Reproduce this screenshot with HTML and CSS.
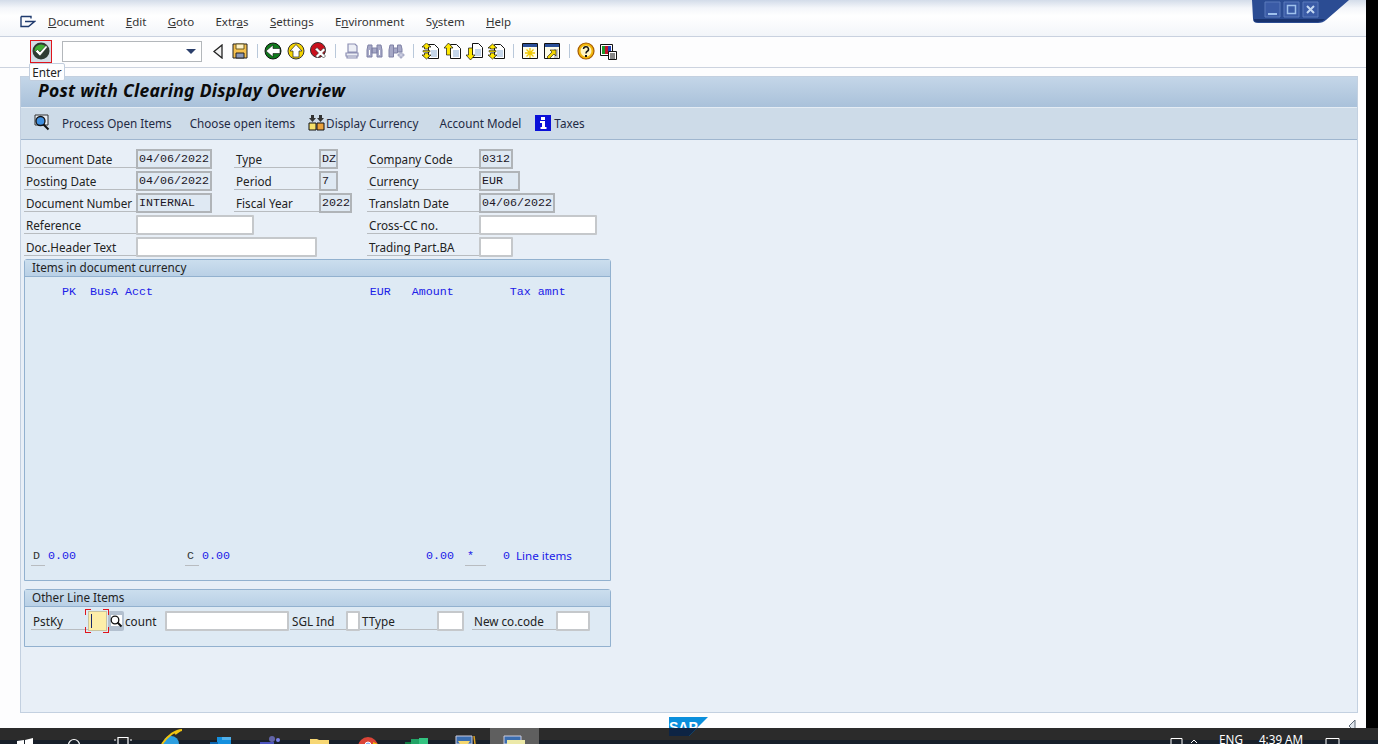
FILE: index.html
```html
<!DOCTYPE html>
<html lang="en">
<head>
    <meta charset="UTF-8">
    <meta name="viewport" content="width=device-width, initial-scale=1.0">
    <title>Post with Clearing Display Overview</title>
    <link rel="stylesheet" href="styles.css">
</head>
<body>
    <div class="screen">
        <div class="window-row">
            <div class="sap">
                <div class="menubar">
                    <svg class="menu-icon" width="16" height="14" viewBox="0 0 16 14"><path d="M1 1.500h10v2M1 1.500v10h7.500l6-5H5" fill="none" stroke="#1f3a6e" stroke-width="1.400"/></svg>
                    <a class="menu-item"><u>D</u>ocument</a>
                    <a class="menu-item"><u>E</u>dit</a>
                    <a class="menu-item"><u>G</u>oto</a>
                    <a class="menu-item">Extr<u>a</u>s</a>
                    <a class="menu-item"><u>S</u>ettings</a>
                    <a class="menu-item">E<u>n</u>vironment</a>
                    <a class="menu-item">S<u>y</u>stem</a>
                    <a class="menu-item"><u>H</u>elp</a>
                </div>

                <div class="toolbar">
                    <button class="enter-btn" type="button">
                        <svg width="18" height="18" viewBox="0 0 18 18"><circle cx="9" cy="9" r="8.500" fill="#2f3a33"/><path d="M2.500 9a6.500 6.500 0 0 1 12-3.500L8 9z" fill="#3fae35"/><path d="M3.500 9.500l2-2 2.500 2.500 6-6.500 1.500 1.500-7.500 9z" fill="#fff" stroke="#1d2a20" stroke-width=".5"/></svg>
                    </button>
                    <div class="command-field"><span class="dropdown-arrow"></span></div>
                    <div class="tool-group">
                        <span class="tool"><svg width="12" height="15" viewBox="0 0 12 15"><path d="M10 1v13L2 7.500z" fill="#f2f2f2" stroke="#222" stroke-width="1.300"/></svg></span>
                        <span class="tool"><svg width="16" height="16" viewBox="0 0 16 16"><path d="M1 1h14v14H1z" fill="#f5c04e" stroke="#222"/><path d="M4 1h8v5H4z" fill="#fff3c8" stroke="#6d5a20"/><path d="M4 10h8v5H4z" fill="#8a97b8" stroke="#222"/></svg></span>
                    </div>
                    <span class="sep"></span>
                    <div class="tool-group nav-group">
                        <span class="tool"><svg width="18" height="18" viewBox="0 0 18 18"><circle cx="9" cy="9" r="8" fill="#0f7a1c" stroke="#111"/><path d="M2 9l7-6v3.500h7v5H9V15z" fill="#fff" stroke="#111" stroke-width=".6"/></svg></span>
                        <span class="tool"><svg width="18" height="18" viewBox="0 0 18 18"><circle cx="9" cy="9" r="8" fill="#f5d400" stroke="#333"/><path d="M9 2.500l6 6.500h-3v6H6V9H3z" fill="#fff" stroke="#222" stroke-width=".7"/></svg></span>
                        <span class="tool"><svg width="18" height="18" viewBox="0 0 18 18"><circle cx="8" cy="8" r="7.500" fill="#c9101c" stroke="#333"/><path d="M5 7.500l2-2 3.500 3.500 3-3 2 2-3 3 3 3-2 2-3-3-3 3-2-2 3-3z" fill="#fff" stroke="#222" stroke-width=".6"/></svg></span>
                    </div>
                    <span class="sep"></span>
                    <div class="tool-group">
                        <span class="tool"><svg width="16" height="16" viewBox="0 0 16 16"><path d="M4 1h7l2 2v6H4zM2 10h12v3H2zM3 13h10v2H3z" fill="#eceef5" stroke="#8e90b4" stroke-width="1.200"/></svg></span>
                        <span class="tool"><svg width="17" height="16" viewBox="0 0 17 16"><path d="M2 2h4v12H1V7zM11 2h4l1 5v7h-5zM6 5h5v5H6z" fill="#a6a8c6" stroke="#7f81a6"/><path d="M3 7h1v5H3zM13 7h1v5h-1z" fill="#fff"/></svg></span>
                        <span class="tool"><svg width="17" height="16" viewBox="0 0 17 16"><path d="M2 2h3.500v12H1V7zM9.500 2H13l1 4v3H9.500zM5.500 5h4v5h-4z" fill="#a6a8c6" stroke="#7f81a6"/><path d="M12 9h2v2h2v2h-2v2h-2v-2h-2v-2h2z" fill="#c8cadf" stroke="#8c8eae" stroke-width=".6"/></svg></span>
                    </div>
                    <span class="sep"></span>
                    <div class="tool-group">
                        <span class="tool"><svg width="17" height="17" viewBox="0 0 17 17"><path d="M6.500 1.500h6l4 4v10h-10z" fill="#fff" stroke="#111"/><path d="M9 7h6v7H9z" fill="#c5d6ea"/><path d="M4.500 0L9 4H6.500v2h-4V4H0zM4.500 16L9 12H6.500v-2h-4v2H0z" fill="#ffe800" stroke="#111" stroke-width=".7"/><path d="M1 7.500h7v1.500H1z" fill="#ffe800" stroke="#111" stroke-width=".5"/></svg></span>
                        <span class="tool"><svg width="17" height="17" viewBox="0 0 17 17"><path d="M6.500 1.500h6l4 4v10h-10z" fill="#fff" stroke="#111"/><path d="M9 7h6v7H9z" fill="#c5d6ea"/><path d="M4.500 0L9 5H6.500v7h-4V5H0z" fill="#ffe800" stroke="#111" stroke-width=".7"/></svg></span>
                        <span class="tool"><svg width="17" height="17" viewBox="0 0 17 17"><path d="M6.500 .5h6l4 4v10h-10z" fill="#fff" stroke="#111"/><path d="M9 6h6v7H9z" fill="#c5d6ea"/><path d="M4.500 17L9 12H6.500V5h-4v7H0z" fill="#ffe800" stroke="#111" stroke-width=".7"/></svg></span>
                        <span class="tool"><svg width="17" height="17" viewBox="0 0 17 17"><path d="M6.500 1.500h6l4 4v10h-10z" fill="#fff" stroke="#111"/><path d="M9 7h6v7H9z" fill="#c5d6ea"/><path d="M4.500 1L9 5H6.500v1h-4V5H0zM4.500 16L9 12H6.500v-2h-4v2H0z" fill="#ffe800" stroke="#111" stroke-width=".7"/><path d="M1 7.500h7v1.500H1z" fill="#ffe800" stroke="#111" stroke-width=".5"/></svg></span>
                    </div>
                    <span class="sep"></span>
                    <div class="tool-group">
                        <span class="tool"><svg width="16" height="16" viewBox="0 0 16 16"><path d="M.5.500h15v15H.5z" fill="#fffde8" stroke="#111"/><path d="M1 1h14v3H1z" fill="#2a4f9a"/><path d="M8 5v10M3 10h10M4.500 6.500l7 7M11.500 6.500l-7 7" stroke="#f0c800" stroke-width="1.300"/></svg></span>
                        <span class="tool"><svg width="16" height="16" viewBox="0 0 16 16"><path d="M.5.500h15v15H.5z" fill="#fffde8" stroke="#111"/><path d="M1 1h14v3H1z" fill="#2a4f9a"/><path d="M10 6h4v9h-4z" fill="#c8c8c8"/><path d="M3 14l5-5-2-2h6v6l-2-2-5 5z" fill="#f3d400" stroke="#111" stroke-width=".6"/></svg></span>
                    </div>
                    <span class="sep"></span>
                    <div class="tool-group">
                        <span class="tool"><svg width="18" height="18" viewBox="0 0 18 18"><circle cx="9" cy="9" r="8" fill="#f2b90c" stroke="#a85b00" stroke-width="1.200"/><circle cx="9" cy="9" r="5.500" fill="#fff6c4"/><path d="M6.500 7a2.500 2.500 0 1 1 3.500 2.500c-1 .5-1 1-1 2" fill="none" stroke="#111" stroke-width="1.500"/><path d="M8 13h2v2H8z" fill="#111"/></svg></span>
                        <span class="tool"><svg width="17" height="17" viewBox="0 0 17 17"><path d="M.5 1.500h12v11H.5z" fill="#fff" stroke="#111"/><path d="M2 3h3v8H2z" fill="#1c9a2c"/><path d="M5 3h3v8H5z" fill="#c4122a"/><path d="M8 3h3v8H8z" fill="#2244b8"/><path d="M8.500 8.500h8v8h-8z" fill="#fff" stroke="#111"/><path d="M10 11h5M10 13h5M10 15h5" stroke="#111"/></svg></span>
                    </div>
                </div>

                <div class="tooltip">Enter</div>

                <main class="panel">
                    <h1 class="title">Post with Clearing Display Overview</h1>
                    <div class="appbar">
                        <svg class="app-search" width="17" height="17" viewBox="0 0 17 17"><path d="M2 1h13v10H2z" fill="#e8eef5" stroke="#333"/><circle cx="7.500" cy="7" r="4.500" fill="#3f8fdf" stroke="#111" stroke-width="1.300"/><path d="M10.500 10.500l5 5" stroke="#111" stroke-width="2"/></svg>
                        <span class="app-item app-process">Process Open Items</span>
                        <span class="app-item app-choose">Choose open items</span>
                        <svg class="app-currency" width="17" height="17" viewBox="0 0 17 17"><path d="M1 9h7v7H1z" fill="#f6e26a" stroke="#111"/><path d="M9 9h7v7H9z" fill="#eaa23c" stroke="#111"/><path d="M3 1h3v3h2L4.500 8 1 4h2zM11 1h3v3h2l-3.500 4L9 4h2z" fill="#333"/></svg>
                        <span class="app-item">Display Currency</span>
                        <span class="app-item app-account">Account Model</span>
                        <svg class="app-info" width="16" height="16" viewBox="0 0 16 16"><path d="M0 0h16v16H0z" fill="#0a10d8"/><path d="M6 2h4v3H6zM5 6h5v6h1.500v2h-6v-2H7V8H5z" fill="#fff"/></svg>
                        <span class="app-item">Taxes</span>
                    </div>

                    <div class="panel-body">
                        <form class="head-form">
                            <label class="lbl">Document Date</label>
                            <div class="field w-date">04/06/2022</div>
                            <label class="lbl lbl-mid">Type</label>
                            <div class="field w-short">DZ</div>
                            <label class="lbl lbl-right">Company Code</label>
                            <div class="field w-code">0312</div>

                            <label class="lbl">Posting Date</label>
                            <div class="field w-date">04/06/2022</div>
                            <label class="lbl lbl-mid">Period</label>
                            <div class="field w-short">7</div>
                            <label class="lbl lbl-right">Currency</label>
                            <div class="field w-curr">EUR</div>

                            <label class="lbl">Document Number</label>
                            <div class="field w-date">INTERNAL</div>
                            <label class="lbl lbl-mid">Fiscal Year</label>
                            <div class="field w-year">2022</div>
                            <label class="lbl lbl-right">Translatn Date</label>
                            <div class="field w-date">04/06/2022</div>

                            <label class="lbl">Reference</label>
                            <input class="entry w-ref span-ref" type="text">
                            <label class="lbl lbl-right">Cross-CC no.</label>
                            <input class="entry w-ref" type="text">

                            <label class="lbl">Doc.Header Text</label>
                            <input class="entry w-text span-ref" type="text">
                            <label class="lbl lbl-right">Trading Part.BA</label>
                            <input class="entry w-code" type="text">
                        </form>

                        <section class="group group-items">
                            <h2 class="group-head">Items in document currency</h2>
                            <div class="item-cols">PK  BusA Acct                               EUR   Amount        Tax amnt</div>
                            <div class="totals">
                                <span class="tot-key">D</span>
                                <span class="tot-val">0.00</span>
                                <span class="tot-key">C</span>
                                <span class="tot-val">0.00</span>
                                <span class="tot-sum">0.00</span>
                                <span class="tot-key tot-star">*</span>
                                <span class="tot-count">0</span>
                                <span class="tot-text">Line items</span>
                            </div>
                        </section>

                        <section class="group group-other">
                            <h2 class="group-head">Other Line Items</h2>
                            <div class="other-row">
                                <label class="lbl">PstKy</label>
                                <div class="focus-field"><span class="caret"></span></div>
                                <span class="search-help"><svg width="14" height="14" viewBox="0 0 14 14"><path d="M2 1h11v11H2z" fill="#fff"/><circle cx="6" cy="6" r="3.800" fill="#fff" stroke="#111" stroke-width="1.300"/><path d="M8.500 8.500l4 4" stroke="#111" stroke-width="2"/></svg></span>
                                <label class="lbl-plain">count</label>
                                <input class="entry w-count" type="text">
                                <label class="lbl">SGL Ind</label>
                                <input class="entry w-fill" type="text">
                                <label class="lbl">TType</label>
                                <input class="entry w-fill" type="text">
                                <span></span>
                                <label class="lbl">New co.code</label>
                                <input class="entry w-fill" type="text">
                            </div>
                        </section>
                    </div>
                </main>

                <div class="statusbar">
                    <svg class="resize-mark" width="8" height="14" viewBox="0 0 8 14"><path d="M7 1v12L1 7z" fill="#dfe5ec" stroke="#5f6a78"/></svg>
                </div>
            </div>
            <div class="edge"></div>
        </div>

        <div class="taskbar">
            <span class="task"><svg width="16" height="16" viewBox="0 0 16 16"><path d="M0 13l7-1v4H0zM8 12l8-2v6H8z" fill="#fff"/></svg></span>
            <span class="task"><svg width="16" height="16" viewBox="0 0 16 16"><circle cx="8" cy="17" r="5.500" fill="none" stroke="#fff" stroke-width="1.200"/></svg></span>
            <span class="task"><svg width="24" height="16" viewBox="0 0 24 16"><path d="M7 9.500h10v7H7z" fill="none" stroke="#fff" stroke-width="1.200"/><path d="M3 12h2M19 12h2" stroke="#fff" stroke-width="1.200"/></svg></span>
            <span class="task"><svg width="24" height="16" viewBox="0 0 24 16"><circle cx="11" cy="16" r="8" fill="#2d9fe0"/><path d="M2 16c6-9 14-14 20-14-2 0-4 2-7 4" fill="none" stroke="#f1c40f" stroke-width="2"/></svg></span>
            <span class="task"><svg width="24" height="16" viewBox="0 0 24 16"><path d="M8 9h14v7H8z" fill="#1490df"/><path d="M1 14h8v2H1z" fill="#0a64ad"/><path d="M13 9h9v3h-9z" fill="#50b0ec"/></svg></span>
            <span class="task"><svg width="24" height="16" viewBox="0 0 24 16"><circle cx="14" cy="11" r="3" fill="#6264a7"/><circle cx="20" cy="12" r="2" fill="#7b83eb"/><path d="M2 14h14v2H2z" fill="#4b53bc"/></svg></span>
            <span class="task"><svg width="24" height="16" viewBox="0 0 24 16"><path d="M3 11h7l2 1h10v4H3z" fill="#f7d774"/></svg></span>
            <span class="task"><svg width="24" height="16" viewBox="0 0 24 16"><circle cx="12" cy="19" r="10" fill="#db4437"/><path d="M17 14l5 2h-5z" fill="#f4c20d"/><circle cx="12" cy="17" r="3" fill="#8ab4f8" stroke="#fff"/></svg></span>
            <span class="task"><svg width="26" height="16" viewBox="0 0 26 16"><path d="M1 14h10v2H1z" fill="#107c41"/><path d="M7 11h8v5H7z" fill="#21a366"/><path d="M15 10h9v6h-9z" fill="#33c481"/></svg></span>
            <span class="task"><svg width="24" height="16" viewBox="0 0 24 16"><path d="M2 8h16v8H2z" fill="#3a6db0" stroke="#ccd"/><path d="M4 13h12l-2 3H6z" fill="#f5d76e"/><path d="M20 8l1 8" stroke="#d9a021" stroke-width="1.500"/></svg></span>
            <span class="task task-active"><svg width="24" height="16" viewBox="0 0 24 16"><path d="M1 8h17v8H1z" fill="#3a6db0" stroke="#ccd"/><path d="M4 12h18v4H4z" fill="#ece9a8"/></svg></span>
            <div class="tray">
                <svg width="14" height="16" viewBox="0 0 14 16"><path d="M1 10.500h11v6H1z" fill="none" stroke="#fff"/></svg>
                <svg class="tray-up" width="8" height="16" viewBox="0 0 8 16"><path d="M1 15l3-3 3 3" fill="none" stroke="#fff"/></svg>
                <span class="tray-lang">ENG</span>
                <span class="tray-time">4:39 AM</span>
                <svg class="tray-note" width="16" height="16" viewBox="0 0 16 16"><path d="M1 10.500h13v6H1z" fill="none" stroke="#fff"/></svg>
            </div>
        </div>

        <svg class="winctl" width="98" height="24" viewBox="0 0 98 24">
            <path d="M0 0h97L74 20q-3 3-8 3H6q-5 0-5-4z" fill="#2b4c93"/>
            <path d="M2 20q0 2 4 2h60q4 0 7-3H2z" fill="#18326e"/>
            <path d="M13 2h15v15H13zM32 2h15v15H32zM51 2h15v15H51z" fill="#3a5ba6" stroke="#5a7abb"/>
            <path d="M16 13h9v2h-9z" fill="#9fc1ec"/>
            <path d="M35.500 5.500h8v8h-8z" fill="none" stroke="#9fc1ec" stroke-width="1.500"/>
            <path d="M55 6l7 7M62 6l-7 7" stroke="#c4d8f2" stroke-width="2"/>
        </svg>

        <svg class="sap-logo" width="39" height="19" viewBox="0 0 39 19">
            <path d="M0 0h39L20 19H0z" fill="#0b8fdc"/>
            <text class="sap-word" x="0" y="15">SAP</text>
            <path d="M0 11h28L20 19H0z" fill="#0d2444"/>
        </svg>
    </div>
</body>
</html>
```

FILE: styles.css
```css
* {
    box-sizing: border-box;
}

body {
    margin: 0;
    font-family: "Noto Sans", Arial, sans-serif;
    font-size: 11.7px;
    color: #222;
    background-color: #000;
}

.screen {
    position: relative;
    width: 1378px;
    height: 744px;
    overflow: hidden;
    display: flex;
    flex-direction: column;
}

.window-row {
    display: flex;
    height: 728px;
}

.sap {
    position: relative;
    width: 1366px;
    display: flex;
    flex-direction: column;
    background-color: #fdfdfe;
}

.edge {
    width: 12px;
    background-color: #000;
}

/* menu */
.menubar {
    height: 37px;
    display: flex;
    align-items: center;
    padding: 7px 0 0 20px;
    border-bottom: 1px solid #c9d1df;
    background: linear-gradient(#d3dce9 0, #f4f6fa 8px, #fff 16px, #f2f5f9 100%);
}

.menu-icon {
    margin-right: 12px;
}

.menu-item {
    margin-right: 21.3px;
    font-size: 11.5px;
    color: #333;
    white-space: nowrap;
}

/* toolbar */
.toolbar {
    height: 31px;
    display: flex;
    align-items: center;
    padding: 0 0 2px 30px;
    border-bottom: 1px solid #ccd3df;
    background-color: #fdfdfe;
}

.enter-btn {
    width: 22px;
    height: 23px;
    padding: 0;
    display: flex;
    align-items: center;
    justify-content: center;
    border: 1px solid #e0141c;
    background-color: #d4dde6;
}

.command-field {
    width: 140px;
    height: 21px;
    margin: 0 5px 0 10px;
    position: relative;
    border: 1px solid #b3b7bb;
    background-color: #fff;
}

.dropdown-arrow {
    position: absolute;
    right: 5px;
    top: 7px;
    border-left: 5px solid transparent;
    border-right: 5px solid transparent;
    border-top: 5px solid #2b3f6b;
}

.tool-group {
    display: flex;
}

.nav-group {
    gap: 1px;
    margin: 0 -1px;
}

.tool {
    width: 22px;
    height: 22px;
    display: flex;
    align-items: center;
    justify-content: center;
}

.sep {
    width: 1px;
    height: 14px;
    margin: 0 5px 0 6px;
    background-color: #b9c8da;
}

.tooltip {
    position: absolute;
    left: 29px;
    top: 63px;
    width: 36px;
    height: 18px;
    z-index: 2;
    text-align: center;
    line-height: 17px;
    color: #222;
    border: 1px solid #c2cede;
    border-radius: 2px;
    background-color: #fdfeff;
}

/* main panel */
.panel {
    height: 637px;
    margin: 8px 8px 0 20px;
    display: flex;
    flex-direction: column;
    border: 1px solid #c3d0e0;
    background-color: #e8eff7;
}

.title {
    height: 30px;
    margin: 0;
    padding-left: 17px;
    font-size: 17.5px;
    font-weight: bold;
    font-style: italic;
    letter-spacing: .27px;
    line-height: 27px;
    color: #0b0b0b;
    white-space: nowrap;
    background: linear-gradient(#c4d6e8, #a9c1da);
}

.appbar {
    height: 33px;
    display: flex;
    align-items: center;
    padding: 0 0 2px 12px;
    border-top: 1px solid #e4ecf4;
    border-bottom: 1px solid #9fb6cf;
    background-color: #cddbe8;
}

.app-item {
    white-space: nowrap;
    color: #1f2a44;
}

.app-process {
    margin-left: 12px;
}

.app-choose {
    margin-left: 18px;
}

.app-currency {
    margin: 0 1px 0 13px;
}

.app-account {
    margin-left: 21px;
}

.app-info {
    margin: 0 3px 0 14px;
}

.panel-body {
    padding: 7px 0 0 3px;
}

/* header form */
.head-form {
    display: grid;
    grid-template-columns: 112px 96px 87px 47px 113px 130px;
    grid-auto-rows: 22px;
}

.lbl {
    height: 21px;
    margin-bottom: 1px;
    padding: 4px 0 0 2px;
    line-height: 16px;
    white-space: nowrap;
    color: #222;
    border-bottom: 1px solid #b8bcc0;
}

.lbl-mid {
    margin-left: 2px;
}

.lbl-right {
    margin-left: 1px;
    grid-column: 5;
}

.field,
.entry,
.focus-field {
    height: 20px;
    margin-top: 2px;
    padding: 0 1px;
    font-family: "Liberation Mono", "Courier New", monospace;
    font-size: 11.67px;
    line-height: 17px;
    color: #1c1626;
    border: 2px solid #b0b4b8;
    background-color: #dfe9f3;
}

.entry {
    display: block;
    border-color: #c5c8cb;
    border-radius: 1px;
    background-color: #fff;
    outline: none;
}

.w-date { width: 76px; }
.w-short { width: 19px; }
.w-year { width: 33px; }
.w-code { width: 34px; }
.w-curr { width: 41px; }
.w-ref { width: 118px; }
.w-text { width: 181px; }
.w-count { width: 124px; }
.w-fill { width: 100%; }

.span-ref {
    grid-column: 2 / 5;
}

/* group boxes */
.group {
    width: 587px;
    display: flex;
    flex-direction: column;
    border: 1px solid #92b1cf;
    border-radius: 3px 3px 0 0;
    background-color: #deeaf4;
}

.group-items {
    height: 322px;
    margin-top: 2px;
}

.group-other {
    height: 58px;
    margin-top: 8px;
}

.group-head {
    height: 17px;
    margin: 0;
    padding-left: 7px;
    font-size: 11.7px;
    font-weight: normal;
    line-height: 15px;
    color: #222;
    border-bottom: 1px solid #92b1cf;
    background: linear-gradient(#cbdeee, #b9d0e6);
}

.item-cols {
    margin: 8px 0 0 37px;
    font-family: "Liberation Mono", "Courier New", monospace;
    font-size: 11.67px;
    line-height: 14px;
    white-space: pre;
    color: #2020e8;
}

.totals {
    display: grid;
    grid-template-columns: 14px 140px 14px 31px 235px 21px 24px auto;
    height: 18px;
    margin: 249px 0 0 6px;
    font-family: "Liberation Mono", "Courier New", monospace;
    font-size: 11.67px;
    line-height: 16px;
    color: #2020e8;
}

.tot-key {
    padding-left: 2px;
    color: #333;
    border-bottom: 1px solid #b8bcc0;
}

.tot-star {
    color: #2020e8;
}

.tot-val {
    padding-left: 3px;
}

.tot-sum {
    padding-right: 11px;
    text-align: right;
}

.tot-count {
    text-align: right;
}

.tot-text {
    margin-left: 6px;
    font-family: "Noto Sans", Arial, sans-serif;
    font-size: 11.6px;
}

.other-row {
    display: grid;
    grid-template-columns: 57px 20px 17px 40px 125px 56px 14px 77px 27px 8px 84px 34px;
    margin: 2px 0 0 6px;
}

.focus-field {
    position: relative;
    width: 19px;
    padding: 0;
    border: 1px solid #c9c4a0;
    background-color: #fdeea8;
}

.focus-field::after {
    content: "";
    position: absolute;
    left: -4px;
    right: -3px;
    top: -3px;
    bottom: -3px;
    background:
        linear-gradient(#e0141c, #e0141c) left top / 6px 1px no-repeat,
        linear-gradient(#e0141c, #e0141c) left top / 1px 6px no-repeat,
        linear-gradient(#e0141c, #e0141c) right top / 6px 1px no-repeat,
        linear-gradient(#e0141c, #e0141c) right top / 1px 6px no-repeat,
        linear-gradient(#e0141c, #e0141c) left bottom / 6px 1px no-repeat,
        linear-gradient(#e0141c, #e0141c) left bottom / 1px 6px no-repeat,
        linear-gradient(#e0141c, #e0141c) right bottom / 6px 1px no-repeat,
        linear-gradient(#e0141c, #e0141c) right bottom / 1px 6px no-repeat;
}

.caret {
    display: block;
    width: 1px;
    height: 14px;
    margin: 2px 0 0 2px;
    background-color: #1a2a6c;
}

.search-help {
    width: 16px;
    height: 20px;
    margin-top: 2px;
    display: flex;
    align-items: center;
    justify-content: center;
    border-radius: 2px;
    background-color: #b3c0cf;
}

.lbl-plain {
    padding: 4px 0 0;
    line-height: 16px;
}

/* bottom strip */
.statusbar {
    flex: 1;
    position: relative;
    background-color: #fdfdfe;
}

.resize-mark {
    position: absolute;
    right: 10px;
    top: 6px;
}

/* windows taskbar */
.taskbar {
    height: 16px;
    display: flex;
    z-index: 1;
    overflow: hidden;
    background: linear-gradient(#2b2b2b 0, #2b2b2b 12px, #18202a 12px);
}

.task {
    width: 49px;
    height: 16px;
    display: flex;
    justify-content: center;
    flex-shrink: 0;
}

.task-active {
    background-color: #5f5f5f;
}

.tray {
    flex: 1;
    display: flex;
    padding-left: 631px;
    color: #fff;
}

.tray-up {
    margin-left: 6px;
}

.tray-lang {
    margin-left: 21px;
    padding-top: 3px;
    line-height: 16px;
}

.tray-time {
    margin-left: 16px;
    padding-top: 3px;
    line-height: 16px;
    white-space: nowrap;
}

.tray-note {
    margin-left: 22px;
}

.winctl {
    position: absolute;
    left: 1252px;
    top: 0;
}

.sap-logo {
    position: absolute;
    left: 669px;
    top: 717px;
    z-index: 2;
}

.sap-word {
    font-family: "Liberation Sans", Arial, sans-serif;
    font-size: 14px;
    font-weight: bold;
    fill: #fff;
}
```
